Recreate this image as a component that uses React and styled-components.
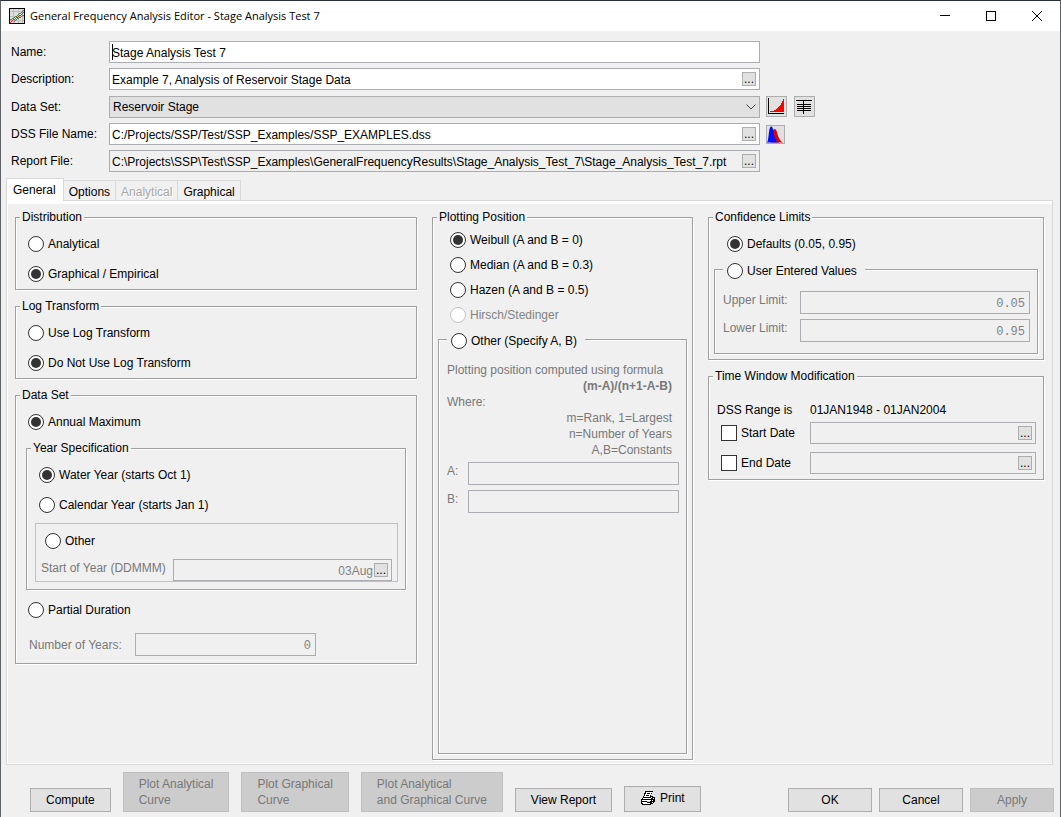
import { useState } from "react";
import styled, { createGlobalStyle } from "styled-components";

const AppIcon = () => (
    <svg width="16" height="16" viewBox="0 0 16 16" shapeRendering="crispEdges">
        <rect width="16" height="16" fill="#000" />
        <rect x="1" y="1" width="14" height="14" fill="#e0e0e0" />
        <path
            d="M4 1h1v14h-1zM9 1h1v14h-1zM13 1h1v14h-1zM1 3h14v1h-14zM1 8h14v1h-14zM1 12h14v1h-14z"
            fill="#bcbcbc"
        />
        <path
            d="M1 11h2v1h-2zM3 10h2v1h-2zM5 9h1v1h-1zM6 8h2v1h-2zM8 7h1v1h-1zM9 6h1v1h-1zM10 5h2v1h-2zM12 4h1v1h-1zM13 3h1v1h-1zM14 2h1v1h-1zM5 13h1v1h-1zM6 12h1v1h-1zM7 11h1v1h-1zM8 10h2v1h-2zM10 9h2v1h-2zM12 8h1v1h-1zM13 7h2v1h-2z"
            fill="#2e9a3a"
        />
        <path
            d="M1 14h1v1h-1zM2 13h1v1h-1zM3 12h1v1h-1zM4 11h2v1h-2zM6 10h1v1h-1zM7 9h2v1h-2zM9 8h1v1h-1zM10 7h2v1h-2zM12 6h1v1h-1zM13 5h1v1h-1zM14 4h1v1h-1z"
            fill="#f02020"
        />
    </svg>
);

const PlotIcon = () => (
    <svg width="19" height="19" viewBox="0 0 19 19" shapeRendering="crispEdges">
        <path d="M1 1h1v15h15v1H1z" fill="#000" />
        <path
            d="M3 15v-1h4v-1h2v-1h1v-1h1v-1h1V9h1V8h1V6h1V4h1V2h1v13z"
            fill="#f00"
        />
    </svg>
);

const TableIcon = () => (
    <svg width="19" height="19" viewBox="0 0 19 19" shapeRendering="crispEdges">
        <path
            d="M1 3h16v1h-16zM2 7h14v1h-14zM2 9h14v1h-14zM2 11h14v1h-14zM2 13h14v1h-14zM8 3h1v14h-1z"
            fill="#000"
        />
    </svg>
);

const CurveIcon = () => (
    <svg width="17" height="17" viewBox="0 0 17 17">
        <path
            d="M4 16C5 12 5 3 7.500 3C10 3 10 8 12 12C13 14.500 14 15.500 16 16.500H4z"
            fill="#e00000"
        />
        <path
            d="M0 16.500C2 15 1.500 0.500 4 0.500C7 0.500 6 8 8.500 13C9.500 15 10 16 12 16.500z"
            fill="#0010ff"
        />
    </svg>
);

const PrinterIcon = () => (
    <svg width="16" height="16" viewBox="0 0 16 16" shapeRendering="crispEdges">
        <path d="M5 1h8v1h-1v2h-1v2h2v1h2v5h-1v1h-1v1h-2v1H2v-1H1V9h1V8h1V6h1V3h1z" fill="#000" />
        <path d="M6 2h6v1h-1v2h-1v2H4V6h1V4h1z" fill="#fff" />
        <path d="M7 3h3v1H7zM6 5h3v1H6z" fill="#000" />
        <path d="M3 8h8v1H3zM2 10h9v1H2zM3 13h7v1H3zM2 12h5v1H2zM11 7h1v1h-1zM13 8h1v1h-1zM12 10h1v1h-1zM12 12h1v1h-1z" fill="#fff" />
        <path d="M7 11h3v1H7z" fill="#f5e400" />
    </svg>
);

const ChevronIcon = () => (
    <svg width="10" height="6" viewBox="0 0 10 6">
        <path d="M0.500 0.500L5 5L9.500 0.500" fill="none" stroke="#444" />
    </svg>
);

const Radio = ({ indent, label, ...rest }) => (
    <Choice $indent={indent} $disabled={rest.disabled}>
        <RadioInput type="radio" {...rest} />
        {label}
    </Choice>
);

const Field = ({ children, more, moreLabel, readOnly, ...rest }) => (
    <FieldBox $grey={readOnly || rest.disabled}>
        {children}
        <TextInput type="text" readOnly={readOnly} {...rest} />
        {more && <MoreButton aria-label={moreLabel}>...</MoreButton>}
    </FieldBox>
);

const tabs = ["General", "Options", "Analytical", "Graphical"];

const App = () => {
    const [form, setForm] = useState({
        name: "Stage Analysis Test 7",
        description: "Example 7, Analysis of Reservoir Stage Data",
        dssFile: "C:/Projects/SSP/Test/SSP_Examples/SSP_EXAMPLES.dss"
    });
    const [options, setOptions] = useState({
        distribution: "graphical",
        log: "no",
        dataSet: "annual",
        year: "water",
        position: "weibull",
        limits: "defaults"
    });

    const handleChangeForm = (event) => {
        setForm({ ...form, [event.target.name]: event.target.value });
    };

    const radio = (name, value) => ({
        name,
        value,
        checked: options[name] === value,
        onChange: () => setOptions({ ...options, [name]: value })
    });

    return (
        <Window>
            <GlobalStyle />
            <TitleBar>
                <AppIcon />
                <Title>General Frequency Analysis Editor - Stage Analysis Test 7</Title>
                <WindowButton aria-label="Minimize">
                    <svg width="10" height="10" viewBox="0 0 10 10" shapeRendering="crispEdges">
                        <path d="M0 4h10v1h-10z" fill="#000" />
                    </svg>
                </WindowButton>
                <WindowButton aria-label="Maximize">
                    <svg width="10" height="10" viewBox="0 0 10 10" shapeRendering="crispEdges">
                        <path d="M0 0h10v10h-10zM1 1v8h8v-8z" fill="#000" fillRule="evenodd" />
                    </svg>
                </WindowButton>
                <WindowButton aria-label="Close">
                    <svg width="10" height="10" viewBox="0 0 10 10">
                        <path d="M0 0l10 10M10 0l-10 10" stroke="#000" />
                    </svg>
                </WindowButton>
            </TitleBar>

            <Header>
                <label htmlFor="name">Name:</label>
                <Field id="name" name="name" value={form.name} onChange={handleChangeForm}>
                    <Caret />
                </Field>
                <span />

                <label htmlFor="description">Description:</label>
                <Field
                    id="description"
                    name="description"
                    value={form.description}
                    onChange={handleChangeForm}
                    more
                    moreLabel="Edit description"
                />
                <span />

                <label htmlFor="dataSet">Data Set:</label>
                <SelectBox>
                    <select id="dataSet">
                        <option>Reservoir Stage</option>
                    </select>
                    <ChevronIcon />
                </SelectBox>
                <Tools>
                    <IconButton aria-label="Plot data set">
                        <PlotIcon />
                    </IconButton>
                    <IconButton aria-label="Tabulate data set">
                        <TableIcon />
                    </IconButton>
                </Tools>

                <label htmlFor="dssFile">DSS File Name:</label>
                <Field
                    id="dssFile"
                    name="dssFile"
                    value={form.dssFile}
                    onChange={handleChangeForm}
                    more
                    moreLabel="Browse DSS file"
                />
                <Tools>
                    <IconButton aria-label="Open DSS viewer">
                        <CurveIcon />
                    </IconButton>
                </Tools>

                <label htmlFor="reportFile">Report File:</label>
                <Field
                    id="reportFile"
                    defaultValue="C:\Projects\SSP\Test\SSP_Examples\GeneralFrequencyResults\Stage_Analysis_Test_7\Stage_Analysis_Test_7.rpt"
                    readOnly
                    more
                    moreLabel="Browse report file"
                />
            </Header>

            <TabBar role="tablist">
                {tabs.map((tab) => (
                    <Tab
                        key={tab}
                        role="tab"
                        $active={tab === "General"}
                        aria-selected={tab === "General"}
                        disabled={tab === "Analytical"}
                    >
                        {tab}
                    </Tab>
                ))}
            </TabBar>

            <Pane role="tabpanel">
                <Column>
                    <Group>
                        <legend>Distribution</legend>
                        <Radio label="Analytical" {...radio("distribution", "analytical")} />
                        <Radio label="Graphical / Empirical" {...radio("distribution", "graphical")} />
                    </Group>
                    <Group>
                        <legend>Log Transform</legend>
                        <Radio label="Use Log Transform" {...radio("log", "yes")} />
                        <Radio label="Do Not Use Log Transform" {...radio("log", "no")} />
                    </Group>
                    <Group>
                        <legend>Data Set</legend>
                        <Radio label="Annual Maximum" {...radio("dataSet", "annual")} />
                        <YearGroup>
                            <legend>Year Specification</legend>
                            <Radio label="Water Year (starts Oct 1)" {...radio("year", "water")} />
                            <Radio label="Calendar Year (starts Jan 1)" {...radio("year", "calendar")} />
                            <OtherYear>
                                <Radio indent={9} label="Other" {...radio("year", "other")} />
                                <StartRow>
                                    <Muted htmlFor="startYear">Start of Year (DDMMM)</Muted>
                                    <Field
                                        id="startYear"
                                        defaultValue="03Aug"
                                        disabled
                                        $right
                                        more
                                        moreLabel="Pick start of year"
                                    />
                                </StartRow>
                            </OtherYear>
                        </YearGroup>
                        <Radio label="Partial Duration" {...radio("dataSet", "partial")} />
                        <YearsRow>
                            <Muted htmlFor="years">Number of Years:</Muted>
                            <Field id="years" defaultValue="0" disabled $right $mono />
                        </YearsRow>
                    </Group>
                </Column>

                <PositionGroup>
                    <legend>Plotting Position</legend>
                    <Radio indent={17} label="Weibull (A and B = 0)" {...radio("position", "weibull")} />
                    <Radio indent={17} label="Median (A and B = 0.3)" {...radio("position", "median")} />
                    <Radio indent={17} label="Hazen (A and B = 0.5)" {...radio("position", "hazen")} />
                    <Radio indent={17} label="Hirsch/Stedinger" {...radio("position", "hirsch")} disabled />
                    <OtherPosition>
                        <RadioLegend>
                            <Radio indent={0} label="Other (Specify A, B)" {...radio("position", "other")} />
                        </RadioLegend>
                        <Formula>
                            <Lead>Plotting position computed using formula</Lead>
                            <p><b>(m-A)/(n+1-A-B)</b></p>
                            <Lead>Where:</Lead>
                            <p>m=Rank, 1=Largest</p>
                            <p>n=Number of Years</p>
                            <p>A,B=Constants</p>
                        </Formula>
                        <Params>
                            <Muted htmlFor="paramA">A:</Muted>
                            <Field id="paramA" disabled />
                            <Muted htmlFor="paramB">B:</Muted>
                            <Field id="paramB" disabled />
                        </Params>
                    </OtherPosition>
                </PositionGroup>

                <Column>
                    <LimitsGroup>
                        <legend>Confidence Limits</legend>
                        <Radio indent={18} label="Defaults (0.05, 0.95)" {...radio("limits", "defaults")} />
                        <UserLimits>
                            <RadioLegend>
                                <Radio indent={0} label="User Entered Values" {...radio("limits", "user")} />
                            </RadioLegend>
                            <LimitRows>
                                <Muted htmlFor="upper">Upper Limit:</Muted>
                                <Field id="upper" defaultValue="0.05" disabled $right $mono />
                                <Muted htmlFor="lower">Lower Limit:</Muted>
                                <Field id="lower" defaultValue="0.95" disabled $right $mono />
                            </LimitRows>
                        </UserLimits>
                    </LimitsGroup>
                    <Group>
                        <legend>Time Window Modification</legend>
                        <WindowRows>
                            <span>DSS Range is</span>
                            <span>01JAN1948 - 01JAN2004</span>
                        </WindowRows>
                        <DateRows>
                            <CheckLabel>
                                <CheckInput type="checkbox" />
                                Start Date
                            </CheckLabel>
                            <Field aria-label="Start Date" disabled more moreLabel="Pick start date" />
                            <CheckLabel>
                                <CheckInput type="checkbox" />
                                End Date
                            </CheckLabel>
                            <Field aria-label="End Date" disabled more moreLabel="Pick end date" />
                        </DateRows>
                    </Group>
                </Column>
            </Pane>

            <Footer>
                <Button>Compute</Button>
                <Button disabled>Plot Analytical<br />Curve</Button>
                <Button disabled>Plot Graphical<br />Curve</Button>
                <Button disabled>Plot Analytical<br />and Graphical Curve</Button>
                <Button>View Report</Button>
                <PrintButton>
                    <PrinterIcon />
                    Print
                </PrintButton>
                <DialogButtons>
                    <Button>OK</Button>
                    <Button>Cancel</Button>
                    <Button disabled>Apply</Button>
                </DialogButtons>
            </Footer>
        </Window>
    );
};

export default App;

const GlobalStyle = createGlobalStyle`
    * {
        box-sizing: border-box;
    }

    body {
        margin: 0;
        background: #f0f0f0;
        color: #000;
        font: 12px/18px "Liberation Sans", Arial, sans-serif;
    }

    button, input, select {
        font: inherit;
        color: inherit;
        margin: 0;
    }

    p {
        margin: 0;
    }

    svg {
        display: block;
        flex: none;
    }
`;

const Window = styled.div`
    display: flex;
    flex-direction: column;
    min-height: 100vh;
    border: 1px solid #5f6266;
    border-top-color: #2b313a;
    border-bottom: none;
`;

const TitleBar = styled.div`
    display: flex;
    align-items: center;
    height: 30px;
    padding-left: 8px;
    background: #fff;
`;

const Title = styled.div`
    flex: 1;
    margin-left: 5px;
    font: 11px/16px "Open Sans", sans-serif;
`;

const WindowButton = styled.button`
    display: flex;
    align-items: center;
    justify-content: center;
    width: 46px;
    height: 30px;
    padding: 0;
    border: none;
    background: none;
`;

const Header = styled.div`
    display: grid;
    grid-template-columns: 98px 651fr 300fr;
    row-gap: 5px;
    align-items: center;
    padding: 10px 0 6px 10px;
    white-space: nowrap;
`;

const FieldBox = styled.div`
    display: flex;
    align-items: center;
    min-width: 0;
    height: 22px;
    padding: 0 3px 0 2px;
    border: 1px solid #abadb3;
    background: ${(props) => (props.$grey ? "#f0f0f0" : "#fff")};
`;

const TextInput = styled.input`
    flex: 1;
    min-width: 0;
    height: 18px;
    padding: 1px 1px 0 0;
    border: none;
    outline: none;
    background: none;
    text-align: ${(props) => (props.$right ? "right" : "left")};
    ${(props) => props.$mono && `padding-top: 3px; font-family: "Liberation Mono", monospace;`}

    &:disabled {
        color: #838383;
    }
`;

const Caret = styled.span`
    width: 1px;
    height: 16px;
    margin-right: -1px;
    background: #000;
`;

const MoreButton = styled.button`
    flex: none;
    width: 14px;
    height: 14px;
    padding: 0;
    border: 1px solid #adadad;
    background: #e1e1e1;
    line-height: 12px;
`;

const SelectBox = styled.div`
    display: grid;
    align-items: center;

    > * {
        grid-area: 1 / 1;
    }

    select {
        height: 22px;
        padding: 1px 3px 0;
        border: 1px solid #adadad;
        border-radius: 0;
        background: #e1e1e1;
        appearance: none;
    }

    svg {
        justify-self: end;
        margin-right: 4px;
        pointer-events: none;
    }
`;

const Tools = styled.div`
    display: flex;
    gap: 7px;
    padding: 1px 0 1px 6px;
    align-items: flex-start;
`;

const IconButton = styled.button`
    display: flex;
    padding: 0;
    border: 1px solid #adadad;
    background: #e1e1e1;
`;

const TabBar = styled.div`
    display: flex;
    align-items: flex-end;
    padding-left: 5px;
`;

const Tab = styled.button`
    height: ${(props) => (props.$active ? 23 : 20)}px;
    margin-bottom: ${(props) => (props.$active ? -1 : 0)}px;
    padding: ${(props) => (props.$active ? "0 7px 0 6px" : "2px 5px 0")};
    border: 1px solid #d9d9d9;
    border-width: ${(props) => (props.$active ? "1px 1px 0" : "1px 1px 0 0")};
    background: ${(props) => (props.$active ? "#fff" : "#f0f0f0")};
    z-index: ${(props) => (props.$active ? 1 : 0)};

    &:disabled {
        color: #a8a8a8;
        text-shadow: 1px 1px #fff;
    }
`;

const Pane = styled.div`
    display: grid;
    grid-template-columns: 402fr 261fr 336fr;
    gap: 15px;
    flex: 1;
    margin: 0 7px 0 5px;
    padding: 8px 8px 4px;
    border: 1px solid #d9d9d9;
    box-shadow: inset 0 3px #fff, inset 1px -1px #fff;
`;

const Column = styled.div`
    display: flex;
    flex-direction: column;
    gap: 8px;
    min-width: 0;
`;

const Group = styled.fieldset`
    min-width: 0;
    margin: 0;
    padding: 4px 0 0;
    border: 1px solid #a0a0a0;
    box-shadow: 1px 1px #fff, inset 1px 1px #fff;

    > legend {
        margin-left: 4px;
        padding: 0 2px;
        background: #f0f0f0;
        line-height: 16px;
    }
`;

const YearGroup = styled(Group)`
    margin: 3px 10px 5px;
    padding-bottom: 7px;
`;

const PositionGroup = styled(Group)`
    display: flex;
    flex-direction: column;
    padding: 2px 5px 5px 0;

    > label {
        height: 25px;
    }
`;

const LimitsGroup = styled(Group)`
    padding-bottom: 5px;
`;

const OtherPosition = styled(Group)`
    flex: 1;
    margin: 2px 0 0 5px;
    padding: 13px 7px 0 8px;
`;

const UserLimits = styled(Group)`
    margin: 0 5px;
    padding: 12px 7px 11px 8px;
`;

/* a radio button standing in the top border of its group */
const RadioLegend = styled.legend`
    && {
        margin-left: 0;
        padding: 4px 8px 0 4px;
    }

    label {
        height: 16px;
    }
`;

const OtherYear = styled.div`
    margin: 3px 7px 0 8px;
    padding-top: 2px;
    border: 1px solid #c0c0c0;
`;

const Choice = styled.label`
    display: flex;
    align-items: center;
    gap: 4px;
    height: 30px;
    padding-left: ${(props) => props.$indent ?? 12}px;
    color: ${(props) => (props.$disabled ? "#838383" : "#000")};
`;

const RadioInput = styled.input`
    display: grid;
    place-items: center;
    width: 16px;
    height: 16px;
    border: 1px solid #333;
    border-radius: 50%;
    background: #fff;
    appearance: none;

    &:checked::before {
        content: "";
        width: 10px;
        height: 10px;
        border-radius: 50%;
        background: #333;
    }

    &:disabled {
        border-color: #c4c4c4;
    }
`;

const CheckLabel = styled.label`
    display: flex;
    align-items: center;
    gap: 4px;
    padding-left: 4px;
`;

const CheckInput = styled.input`
    width: 16px;
    height: 16px;
    border: 1px solid #333;
    background: #fff;
    appearance: none;

    &:checked {
        background: #333;
        box-shadow: inset 0 0 0 3px #fff;
    }
`;

const Muted = styled.label`
    color: #787878;
    white-space: nowrap;
`;

const StartRow = styled.div`
    display: grid;
    grid-template-columns: 132px 1fr;
    align-items: start;
    padding: 3px 5px 0;
`;

const YearsRow = styled.div`
    display: grid;
    grid-template-columns: 106px 181fr 100fr;
    align-items: center;
    padding: 8px 0 7px 13px;

    ${FieldBox} {
        height: 23px;
    }
`;

const Formula = styled.div`
    padding-right: 7px;
    color: #787878;
    line-height: 16px;
    text-align: right;
    white-space: nowrap;
`;

const Lead = styled.p`
    text-align: left;
`;

const Params = styled.div`
    display: grid;
    grid-template-columns: 21px 1fr;
    gap: 5px 0;
    padding-top: 4px;

    ${FieldBox} {
        height: 23px;
    }
`;

const LimitRows = styled.div`
    display: grid;
    grid-template-columns: 77px 1fr;
    gap: 5px 0;

    ${FieldBox} {
        height: 23px;
    }
`;

const WindowRows = styled.div`
    display: grid;
    grid-template-columns: 93px 1fr;
    padding: 13px 7px 0 8px;
`;

const DateRows = styled.div`
    display: grid;
    grid-template-columns: 93px 1fr;
    gap: 8px 0;
    padding: 3px 7px 5px 8px;
`;

const Footer = styled.div`
    display: flex;
    align-items: flex-end;
    gap: 12px;
    padding: 7px 6px 5px 29px;
`;

const Button = styled.button`
    display: flex;
    align-items: center;
    justify-content: center;
    gap: 4px;
    padding: 3px 15px;
    border: 1px solid #adadad;
    background: #e1e1e1;
    line-height: 16px;
    text-align: left;
    white-space: nowrap;

    &:disabled {
        border-color: #bfbfbf;
        background: #ccc;
        color: #787878;
    }
`;

const PrintButton = styled(Button)`
    padding-bottom: 5px;
`;

const DialogButtons = styled.div`
    display: flex;
    gap: 7px;
    margin-left: auto;

    ${Button} {
        width: 84px;
    }
`;
